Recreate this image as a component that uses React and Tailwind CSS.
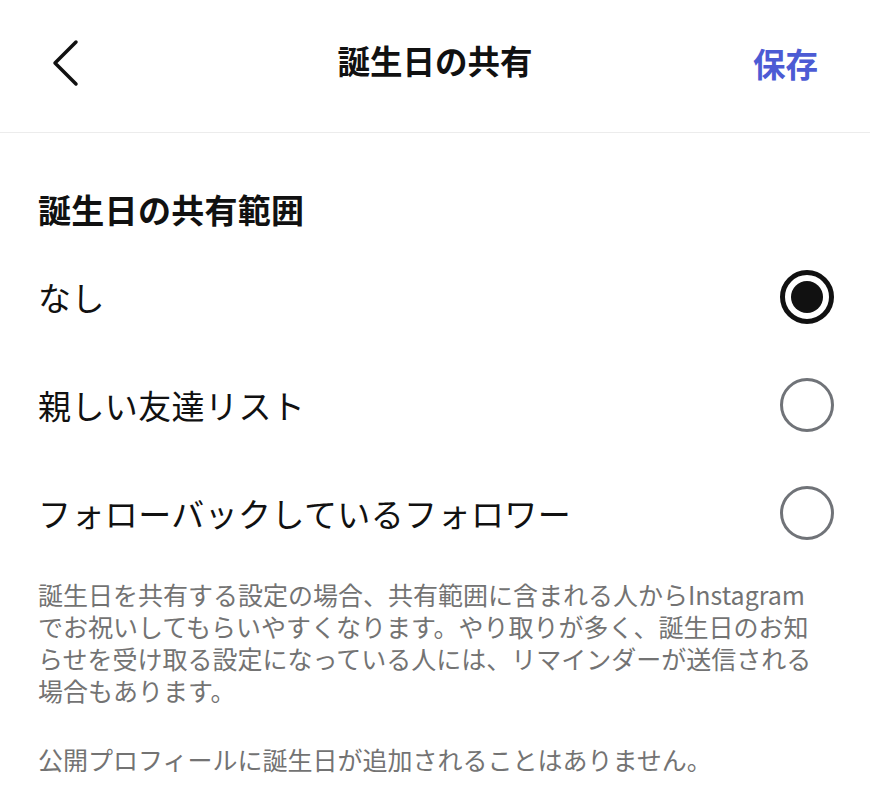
const Radio = ({ checked }) =>
  checked ? (
    <div className="w-[54px] h-[54px] rounded-full border-[5px] border-[#111111] flex items-center justify-center">
      <div className="w-[32px] h-[32px] rounded-full bg-[#111111]" />
    </div>
  ) : (
    <div className="w-[54px] h-[54px] rounded-full border-[3px] border-[#707378]" />
  );

export default function App() {
  const options = [
    { label: 'なし', checked: true },
    { label: '親しい友達リスト', checked: false },
    { label: 'フォローバックしているフォロワー', checked: false },
  ];

  return (
    <div className="w-[870px] h-[806px] bg-white text-[#111111] overflow-hidden font-['Noto_Sans_CJK_JP',sans-serif]">
      {/* Header */}
      <div className="relative h-[133px] border-b border-[#ececec] flex items-center justify-between pl-[50px] pr-[52px] pb-[6px]">
        <svg className="w-[32px] h-[48px]" viewBox="0 0 32 48" fill="none" stroke="#111111" strokeWidth="3.5" strokeLinecap="round" strokeLinejoin="round">
          <path d="M26 3 L5 24 L26 45" />
        </svg>
        <div className="absolute left-0 right-0 text-center text-[32.5px] font-bold pointer-events-none pb-[6px]">
          誕生日の共有
        </div>
        <div className="text-[32.5px] font-semibold text-[#4c5bd4]">保存</div>
      </div>

      {/* Section */}
      <div className="pl-[38px] pr-[36px]">
        <div className="pt-[54px] text-[33px] font-bold leading-[44px] tracking-[0.3px]">誕生日の共有範囲</div>

        <div className="mt-[12px]">
          {options.map((o) => (
            <div key={o.label} className="h-[108px] flex items-center justify-between">
              <span className="text-[33px] leading-[44px] tracking-[0.4px]">{o.label}</span>
              <Radio checked={o.checked} />
            </div>
          ))}
        </div>

        <div className="mt-[11px] w-[790px] text-[25px] leading-[32px] text-[#737373]">
          誕生日を共有する設定の場合、共有範囲に含まれる人からInstagramでお祝いしてもらいやすくなります。やり取りが多く、誕生日のお知らせを受け取る設定になっている人には、リマインダーが送信される場合もあります。
        </div>

        <div className="mt-[37px] w-[790px] text-[25px] leading-[32px] text-[#737373]">
          公開プロフィールに誕生日が追加されることはありません。
        </div>
      </div>
    </div>
  );
}
